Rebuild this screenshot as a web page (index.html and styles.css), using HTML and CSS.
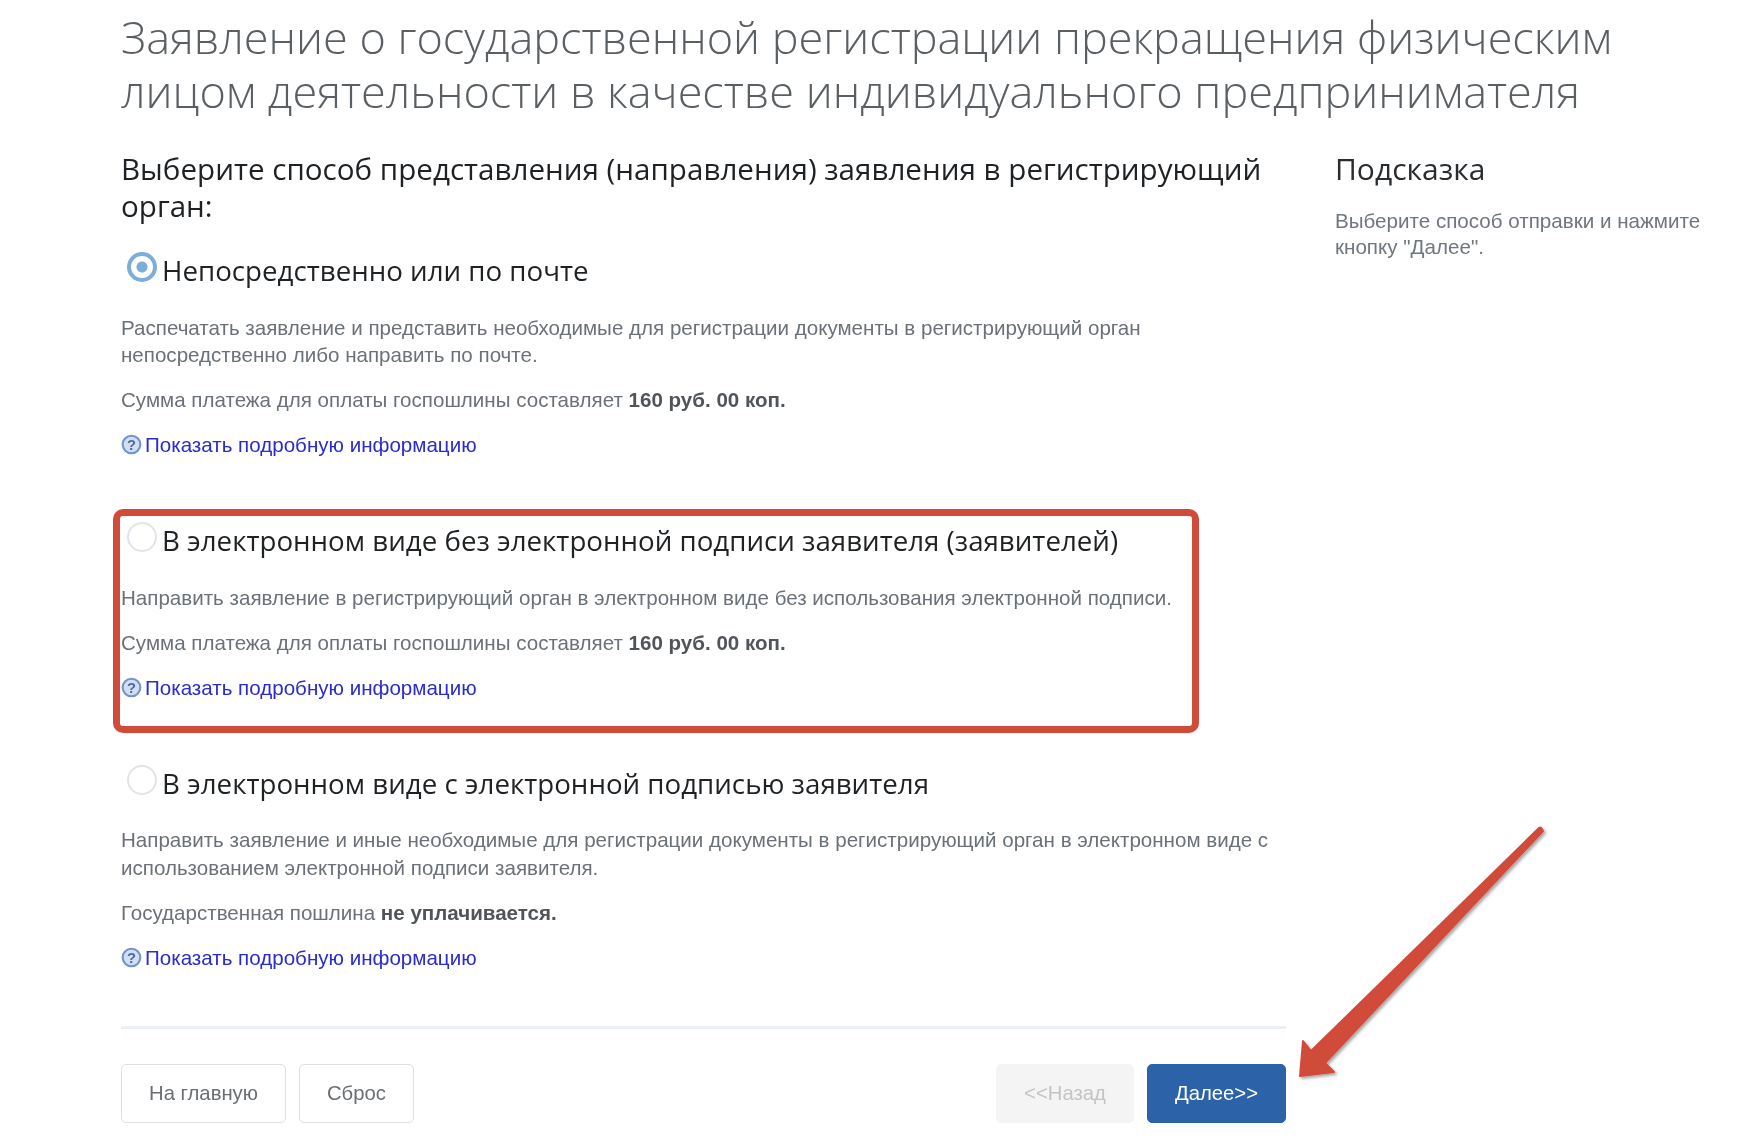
FILE: index.html
```html
<!DOCTYPE html>
<html lang="ru">
<head>
    <meta charset="UTF-8">
    <title>Заявление о прекращении деятельности ИП</title>
    <link rel="stylesheet" href="styles.css">
</head>
<body>
    <div class="page">
        <h1 class="title">Заявление о государственной регистрации прекращения физическим лицом деятельности в качестве индивидуального предпринимателя</h1>
        <div class="columns">
            <div class="main">
                <h2 class="question">Выберите способ представления (направления) заявления в регистрирующий орган:</h2>

                <div class="option">
                    <div class="option-head">
                        <span class="radio checked"></span>
                        <span class="option-title">Непосредственно или по почте</span>
                    </div>
                    <p>Распечатать заявление и представить необходимые для регистрации документы в регистрирующий орган непосредственно либо направить по почте.</p>
                    <p>Сумма платежа для оплаты госпошлины составляет <b>160 руб. 00 коп.</b></p>
                    <a class="more" href="#">
                        <svg class="help" viewBox="0 0 20 20"><circle cx="10" cy="10" r="8.4"/><text x="10" y="15">?</text></svg>Показать подробную информацию
                    </a>
                </div>

                <div class="option marked">
                    <div class="option-head">
                        <span class="radio"></span>
                        <span class="option-title">В электронном виде без электронной подписи заявителя (заявителей)</span>
                    </div>
                    <p>Направить заявление в регистрирующий орган в электронном виде без использования электронной подписи.</p>
                    <p>Сумма платежа для оплаты госпошлины составляет <b>160 руб. 00 коп.</b></p>
                    <a class="more" href="#">
                        <svg class="help" viewBox="0 0 20 20"><circle cx="10" cy="10" r="8.4"/><text x="10" y="15">?</text></svg>Показать подробную информацию
                    </a>
                </div>

                <div class="option">
                    <div class="option-head">
                        <span class="radio"></span>
                        <span class="option-title">В электронном виде с электронной подписью заявителя</span>
                    </div>
                    <p>Направить заявление и иные необходимые для регистрации документы в регистрирующий орган в электронном виде с использованием электронной подписи заявителя.</p>
                    <p>Государственная пошлина <b>не уплачивается.</b></p>
                    <a class="more" href="#">
                        <svg class="help" viewBox="0 0 20 20"><circle cx="10" cy="10" r="8.4"/><text x="10" y="15">?</text></svg>Показать подробную информацию
                    </a>
                </div>

                <div class="actions">
                    <button class="btn">На главную</button>
                    <button class="btn">Сброс</button>
                    <button class="btn disabled push">&lt;&lt;Назад</button>
                    <button class="btn primary">Далее&gt;&gt;</button>
                </div>
            </div>
            <div class="hint">
                <h2 class="hint-title">Подсказка</h2>
                <p>Выберите способ отправки и нажмите кнопку "Далее".</p>
            </div>
        </div>
    </div>

    <svg class="arrow" viewBox="0 0 1756 1148">
        <defs>
            <filter id="arrowShadow" x="-10%" y="-10%" width="120%" height="120%">
                <feDropShadow dx="2" dy="2" stdDeviation="1.5" flood-color="#000" flood-opacity="0.35"/>
            </filter>
        </defs>
        <path d="M1539 828 L1311 1051 L1303 1041 L1300 1076 L1334 1072 L1325 1063 L1543 831 Q1541 826 1539 828 Z" fill="#d14b3a" stroke="#d14b3a" stroke-width="2" stroke-linejoin="round" filter="url(#arrowShadow)"/>
    </svg>
</body>
</html>
```

FILE: styles.css
```css
body {
    margin: 0;
    background-color: #fff;
    font-family: 'Liberation Sans', Arial, sans-serif;
    color: #6b7178;
}
.page {
    padding: 10px 0 0 121px;
    filter: blur(0.4px); /* the reference is an upscaled screenshot */
}
.title {
    margin: 0;
    width: 1560px;
    font-family: 'Open Sans', sans-serif;
    font-weight: 300;
    font-size: 45px;
    line-height: 53.5px;
    color: #5a5f64;
}
.columns {
    display: flex;
    gap: 49px;
    margin-top: 33px;
}
.main {
    width: 1165px;
}
.question {
    margin: 0 0 -1px;
    font-family: 'Open Sans', sans-serif;
    font-weight: 400;
    font-size: 29.6px;
    line-height: 37px;
    color: #1f2225;
}
.option {
    position: relative;
    padding-top: 28px;
    padding-bottom: 34.5px;
}
.option-head {
    display: flex;
    align-items: flex-start;
    gap: 5px;
    padding-left: 6px;
    height: 45px;
}
.radio {
    flex: none;
    width: 30px;
    height: 30px;
    margin-top: 1px;
    box-sizing: border-box;
    border: 2px solid #e1e4e8;
    border-radius: 50%;
    background-color: #fff;
}
.radio.checked {
    border: 4px solid #7dadd8;
    background: radial-gradient(circle, #7dadd8 0 5px, #fff 6px);
}
.option-title {
    font-family: 'Open Sans', sans-serif;
    font-size: 27.7px;
    line-height: 38px;
    color: #1f2225;
}
.option p {
    margin: 17.5px 0 0;
    font-size: 20.57px;
    line-height: 27.5px;
}
.option b {
    color: #50555a;
}
.more {
    display: flex;
    align-items: center;
    gap: 3px;
    margin-top: 17.5px;
    font-size: 20.57px;
    line-height: 27.5px;
    color: #2a2bd0;
    text-decoration: none;
}
.help {
    width: 21px;
    height: 21px;
}
.help circle {
    fill: #d3def2;
    stroke: #6f94d0;
    stroke-width: 2;
}
.help text {
    font-family: 'Liberation Sans', sans-serif;
    font-weight: bold;
    font-size: 14px;
    text-anchor: middle;
    fill: #4a6aa5;
}
.marked::after {
    content: "";
    position: absolute;
    left: -8px;
    top: 16px;
    width: 1086px;
    height: 224px;
    box-sizing: border-box;
    border: 7px solid #d14b3a;
    border-radius: 10px;
}
.actions {
    display: flex;
    gap: 13px;
    border-top: 3px solid #e9f0f7;
    margin-top: 20px;
    padding-top: 35px;
}
.btn {
    height: 59px;
    padding: 0 27px;
    border: 1.5px solid #dcdfe3;
    border-radius: 5px;
    background-color: #fff;
    font-family: 'Liberation Sans', sans-serif;
    font-size: 20.3px;
    color: #6b6f73;
}
.btn.push {
    margin-left: auto;
}
.btn.disabled {
    border-color: #f4f4f4;
    background-color: #f4f4f4;
    color: #c4c4c4;
}
.btn.primary {
    border-color: #2b62a8;
    background-color: #2b62a8;
    color: #fff;
}
.hint {
    flex: 1;
    padding-right: 20px;
}
.hint-title {
    margin: 0;
    font-family: 'Open Sans', sans-serif;
    font-weight: 400;
    font-size: 30px;
    line-height: 37px;
    color: #2a2d30;
}
.hint p {
    margin: 21px 0 0;
    font-size: 20.6px;
    line-height: 26px;
    color: #6f767d;
}
.arrow {
    position: absolute;
    left: 0;
    top: 0;
    width: 1756px;
    height: 1148px;
    pointer-events: none;
}
```
